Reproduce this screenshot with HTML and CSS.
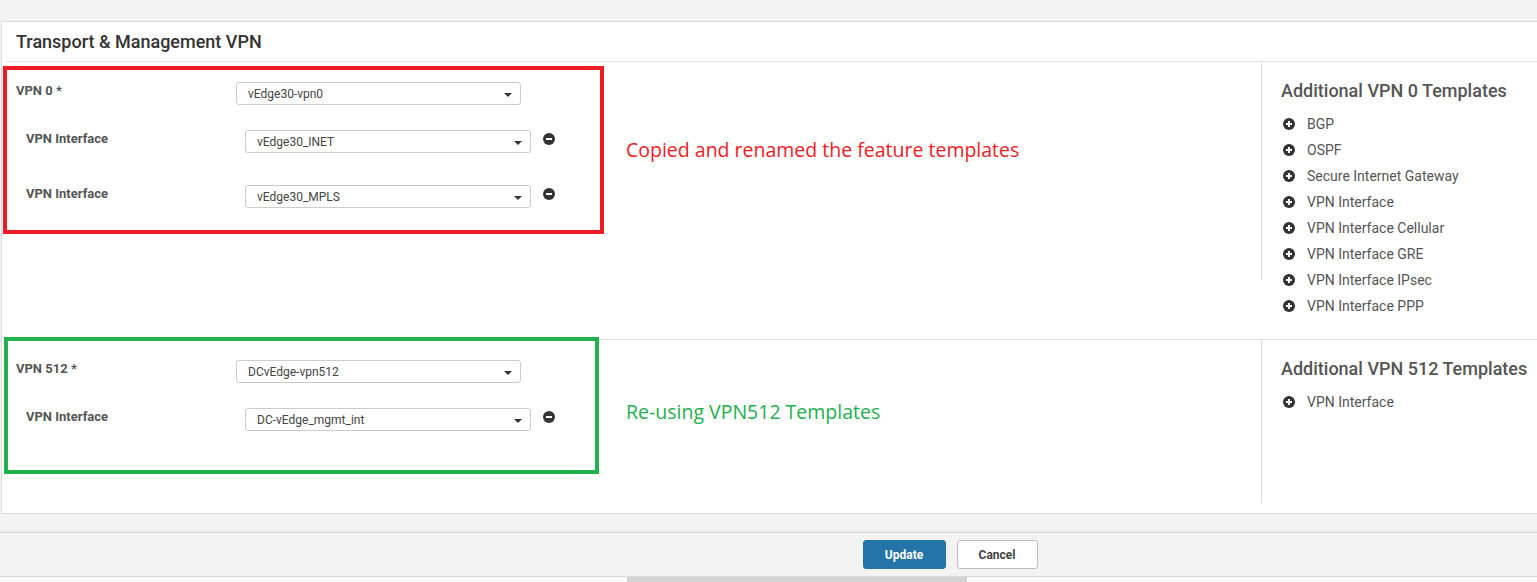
FILE: index.html
```html
<!DOCTYPE html>
<html>
<head>
<meta charset="utf-8">
<link rel="stylesheet" href="styles.css">
</head>
<body>
<div class="page">
  <div class="card">
    <div class="card-title">Transport &amp; Management VPN</div>
    <div class="section s1">
      <div class="left">
        <div class="annot-box red-box">
          <div class="row main">
            <div class="label">VPN 0 *</div>
            <div class="select w285"><span>vEdge30-vpn0</span><i class="caret"></i></div>
          </div>
          <div class="row sub first">
            <div class="label">VPN Interface</div>
            <div class="select w286"><span>vEdge30_INET</span><i class="caret"></i></div>
            <span class="ico minus"></span>
          </div>
          <div class="row sub second">
            <div class="label">VPN Interface</div>
            <div class="select w286"><span>vEdge30_MPLS</span><i class="caret"></i></div>
            <span class="ico minus"></span>
          </div>
        </div>
        <div class="annot-text red-text">Copied and renamed the feature templates</div>
      </div>
      <div class="right r1">
        <div class="r-title">Additional VPN 0 Templates</div>
        <ul class="r-list">
          <li><span class="ico plus"></span>BGP</li>
          <li><span class="ico plus"></span>OSPF</li>
          <li><span class="ico plus"></span>Secure Internet Gateway</li>
          <li><span class="ico plus"></span>VPN Interface</li>
          <li><span class="ico plus"></span>VPN Interface Cellular</li>
          <li><span class="ico plus"></span>VPN Interface GRE</li>
          <li><span class="ico plus"></span>VPN Interface IPsec</li>
          <li><span class="ico plus"></span>VPN Interface PPP</li>
        </ul>
      </div>
    </div>
    <div class="section s2">
      <div class="left">
        <div class="annot-box green-box">
          <div class="row main">
            <div class="label">VPN 512 *</div>
            <div class="select w285"><span>DCvEdge-vpn512</span><i class="caret"></i></div>
          </div>
          <div class="row sub first">
            <div class="label">VPN Interface</div>
            <div class="select w286"><span>DC-vEdge_mgmt_int</span><i class="caret"></i></div>
            <span class="ico minus"></span>
          </div>
        </div>
        <div class="annot-text green-text">Re-using VPN512 Templates</div>
      </div>
      <div class="right r2">
        <div class="r-title">Additional VPN 512 Templates</div>
        <ul class="r-list">
          <li><span class="ico plus"></span>VPN Interface</li>
        </ul>
      </div>
    </div>
  </div>
  <div class="footer">
    <button class="btn primary">Update</button>
    <button class="btn secondary">Cancel</button>
  </div>
  <div class="hscroll"><div class="thumb"></div></div>
</div>
</body>
</html>
```

FILE: styles.css
```css
html, body {
  margin: 0;
  padding: 0;
  background: #f3f3f3;
  font-family: Roboto, "Liberation Sans", sans-serif;
  overflow: hidden;
}
.page {
  width: 1537px;
  height: 582px;
  padding-top: 21px;
  box-sizing: border-box;
  display: flex;
  flex-direction: column;
}
.card {
  margin-left: 1px;
  background: #fff;
  border: 1px solid #dcdcdc;
  border-right: none;
  height: 493px;
  box-sizing: border-box;
  display: flex;
  flex-direction: column;
}
.card-title {
  display: flex;
  align-items: center;
  font-size: 18px;
  font-weight: 500;
  color: #333;
  border-bottom: 1px solid #e3e3e3;
  margin-left: 4px;
  padding-left: 10px;
  padding-bottom: 1px;
  box-sizing: border-box;
  height: 40px;
}
.section {
  display: flex;
}
.s1 {
  height: 277px;
}
.s2 {
  border-top: 1px solid #e3e3e3;
  height: 173px;
}
.left {
  flex: 1;
  display: flex;
  align-items: flex-start;
}
.annot-box {
  box-sizing: border-box;
  border: 4px solid;
}
.red-box {
  border-color: #ed1c24;
  width: 601px;
  height: 168px;
  margin-left: 1px;
  margin-top: 4px;
}
.green-box {
  border-color: #22b14c;
  width: 595px;
  height: 137px;
  margin-left: 2px;
  margin-top: -3px;
}
.row {
  display: flex;
  align-items: flex-start;
}
.label {
  font-size: 13px;
  line-height: 17px;
  font-weight: 700;
  color: #555;
  flex: none;
}
.red-box .row.main { margin-top: 12px; padding-left: 9px; }
.red-box .row.sub { padding-left: 19px; }
.red-box .row.first { margin-top: 25px; }
.red-box .row.second { margin-top: 32px; }
.green-box .row.main { margin-top: 19px; padding-left: 8px; }
.green-box .row.sub { padding-left: 18px; }
.green-box .row.first { margin-top: 25px; }
.main .label { width: 220px; }
.sub .label { width: 219px; }
.select {
  box-sizing: border-box;
  height: 23px;
  border: 1px solid #ccc;
  border-radius: 3px;
  background: #fff;
  display: flex;
  align-items: center;
  justify-content: space-between;
  padding: 0 8px 0 11px;
  font-size: 12px;
  color: #444;
}
.w285 { width: 285px; }
.w286 { width: 286px; }
.caret {
  width: 0;
  height: 0;
  border-left: 4px solid transparent;
  border-right: 4px solid transparent;
  border-top: 4px solid #333;
  margin-top: 2px;
}
.ico {
  position: relative;
  display: inline-block;
  width: 12px;
  height: 12px;
  border-radius: 50%;
  background: #333;
  flex: none;
}
.ico::before, .ico::after {
  content: "";
  position: absolute;
  background: #fff;
}
.ico::before {
  left: 3px;
  top: 5px;
  width: 6px;
  height: 2px;
}
.plus::after {
  left: 5px;
  top: 3px;
  width: 2px;
  height: 6px;
}
.row .minus {
  margin-left: 12px;
  margin-top: 3px;
}
.annot-text {
  font-family: "Open Sans", "Noto Sans", sans-serif;
  font-size: 19.5px;
  line-height: 24px;
  white-space: nowrap;
}
.red-text {
  color: #ed1c24;
  margin-left: 22px;
  margin-top: 76px;
}
.green-text {
  color: #22b14c;
  margin-left: 27px;
  margin-top: 60px;
}
.right {
  width: 276px;
  flex: none;
  border-left: 1px solid #e0e0e0;
  box-sizing: border-box;
  padding-left: 19px;
  padding-top: 18px;
  align-self: flex-start;
}
.r1 { height: 218px; }
.r2 { height: 163px; }
.r-title {
  font-size: 18px;
  line-height: 22px;
  font-weight: 500;
  color: #555;
  white-space: nowrap;
}
.r-list {
  list-style: none;
  margin: 9px 0 0 0;
  padding: 0;
}
.r-list li {
  display: flex;
  align-items: center;
  height: 26px;
  font-size: 14px;
  color: #555;
  white-space: nowrap;
}
.r-list .ico {
  margin-left: 2px;
  margin-right: 12px;
}
.footer {
  margin-top: 18px;
  border-top: 1px solid #dadada;
  box-shadow: 0 -1px 1px rgba(0,0,0,0.04);
  border-bottom: 1px solid #dadada;
  height: 45px;
  box-sizing: border-box;
  display: flex;
  justify-content: center;
  align-items: flex-start;
  padding-top: 7px;
  padding-left: 363px;
  gap: 11px;
}
.btn {
  height: 29px;
  border-radius: 3px;
  font-family: Roboto, "Liberation Sans", sans-serif;
  font-size: 12px;
  font-weight: 700;
  padding: 0;
  cursor: pointer;
}
.primary {
  width: 83px;
  background: #2574a9;
  border: 1px solid #2574a9;
  color: #fff;
}
.secondary {
  width: 81px;
  background: #fff;
  border: 1px solid #bdbdbd;
  color: #444;
}
.hscroll {
  flex: 1;
  background: #fafafa;
  position: relative;
}
.thumb {
  margin-left: 627px;
  width: 340px;
  height: 100%;
  background: #d3d3d3;
}
```
